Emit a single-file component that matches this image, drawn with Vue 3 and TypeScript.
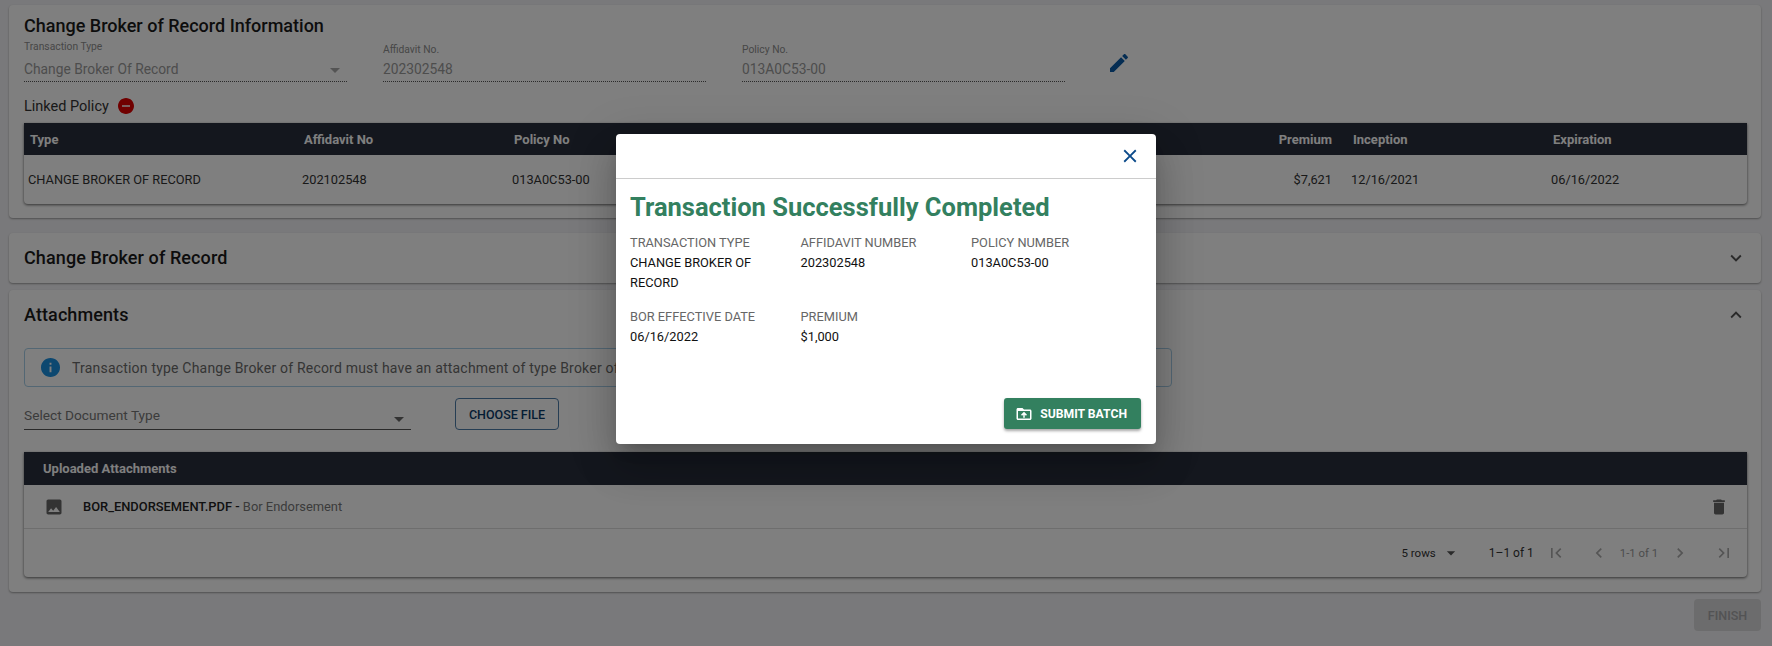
<template>
  <div class="page">
    <section class="card">
      <h2 class="card-title">Change Broker of Record Information</h2>
      <div class="fields">
        <div class="field field-select">
          <label>Transaction Type</label>
          <div class="field-value">
            Change Broker Of Record
            <svg class="field-arrow" viewBox="0 0 24 24"><path :d="icons.dropDown" /></svg>
          </div>
        </div>
        <div class="field">
          <label>Affidavit No.</label>
          <div class="field-value">202302548</div>
        </div>
        <div class="field">
          <label>Policy No.</label>
          <div class="field-value">013A0C53-00</div>
        </div>
        <svg class="edit-icon" viewBox="0 0 24 24"><path :d="icons.edit" /></svg>
      </div>

      <div class="linked">
        Linked Policy
        <svg class="linked-icon" viewBox="2 2 20 20"><path :d="icons.remove" /></svg>
      </div>

      <div class="policy-table">
        <div class="policy-row policy-head">
          <div v-for="col in policyColumns" :key="col.key" :class="{ right: col.right }">{{ col.label }}</div>
        </div>
        <div class="policy-row policy-body">
          <div v-for="col in policyColumns" :key="col.key" :class="{ right: col.right }">{{ policy[col.key] }}</div>
        </div>
      </div>
    </section>

    <section class="card card-collapsed">
      <h2 class="card-title wide">Change Broker of Record</h2>
      <svg class="chevron" viewBox="0 0 24 24"><path :d="icons.expandMore" /></svg>
    </section>

    <section class="card card-attachments">
      <div class="attach-head">
        <h2 class="card-title wide">Attachments</h2>
        <svg class="chevron" viewBox="0 0 24 24"><path :d="icons.expandLess" /></svg>
      </div>

      <div class="alert">
        <svg class="alert-icon" viewBox="2 2 20 20"><path :d="icons.info" /></svg>
        Transaction type Change Broker of Record must have an attachment of type Broker of Record Endorsement
      </div>

      <div class="doc-row">
        <div class="doc-select">
          Select Document Type
          <svg class="doc-arrow" viewBox="0 0 24 24"><path :d="icons.dropDown" /></svg>
        </div>
        <button class="choose-btn" type="button">CHOOSE FILE</button>
      </div>

      <div class="upload-table">
        <div class="upload-head">Uploaded Attachments</div>
        <div class="upload-row">
          <svg class="file-icon" viewBox="0 0 24 24"><path :d="icons.image" /></svg>
          <span class="file-name">BOR_ENDORSEMENT.PDF - </span>
          <span class="file-type">Bor Endorsement</span>
          <svg class="trash-icon" viewBox="0 0 24 24"><path :d="icons.trash" /></svg>
        </div>
        <div class="upload-footer">
          <span class="rows">5 rows</span>
          <svg class="rows-arrow" viewBox="0 0 24 24"><path :d="icons.dropDown" /></svg>
          <span class="range">1–1 of 1</span>
          <svg class="pager pager-first" viewBox="0 0 24 24"><path :d="icons.first" /></svg>
          <svg class="pager pager-prev" viewBox="0 0 24 24"><path :d="icons.prev" /></svg>
          <span class="page-of">1-1 of 1</span>
          <svg class="pager pager-next" viewBox="0 0 24 24"><path :d="icons.next" /></svg>
          <svg class="pager pager-last" viewBox="0 0 24 24"><path :d="icons.last" /></svg>
        </div>
      </div>
    </section>

    <div class="actions">
      <button class="finish-btn" type="button" disabled>FINISH</button>
    </div>

    <div class="overlay">
      <div class="modal">
        <div class="modal-head">
          <svg class="close-icon" viewBox="0 0 24 24"><path :d="icons.close" /></svg>
        </div>
        <div class="modal-body">
          <h1 class="modal-title">Transaction Successfully Completed</h1>
          <div class="summary">
            <div v-for="item in summary" :key="item.label" class="summary-item">
              <div class="summary-label">{{ item.label }}</div>
              <div class="summary-value">{{ item.value }}</div>
            </div>
          </div>
        </div>
        <div class="modal-actions">
          <button class="submit-btn" type="button">
            <svg viewBox="0 0 24 24"><path :d="icons.folderUpload" /></svg>
            SUBMIT BATCH
          </button>
        </div>
      </div>
    </div>
  </div>
</template>

<script setup lang="ts">
interface PolicyColumn {
  key: string
  label: string
  right?: boolean
}

const icons = {
  dropDown: 'M7 10l5 5 5-5z',
  edit: 'M3 17.25V21h3.75L17.81 9.94l-3.75-3.75L3 17.25zM20.71 7.04c.39-.39.39-1.02 0-1.41l-2.34-2.34c-.39-.39-1.02-.39-1.41 0l-1.83 1.83 3.75 3.75 1.83-1.83z',
  remove: 'M12 2C6.48 2 2 6.48 2 12s4.48 10 10 10 10-4.48 10-10S17.52 2 12 2zm5 11H7v-2h10v2z',
  info: 'M12 2C6.48 2 2 6.48 2 12s4.48 10 10 10 10-4.48 10-10S17.52 2 12 2zm1 15h-2v-6h2v6zm0-8h-2V7h2v2z',
  expandMore: 'M16.59 8.59L12 13.17 7.41 8.59 6 10l6 6 6-6z',
  expandLess: 'M12 8l-6 6 1.41 1.41L12 10.83l4.59 4.58L18 14z',
  image: 'M21 19V5c0-1.1-.9-2-2-2H5c-1.1 0-2 .9-2 2v14c0 1.1.9 2 2 2h14c1.1 0 2-.9 2-2zM8.5 13.5l2.5 3.01L14.5 12l4.5 6H5l3.5-4.5z',
  trash: 'M6 19c0 1.1.9 2 2 2h8c1.1 0 2-.9 2-2V7H6v12zM19 4h-3.5l-1-1h-5l-1 1H5v2h14V4z',
  first: 'M18.41 16.59L13.82 12l4.59-4.59L17 6l-6 6 6 6zM6 6h2v12H6z',
  prev: 'M15.41 7.41L14 6l-6 6 6 6 1.41-1.41L10.83 12z',
  next: 'M10 6L8.59 7.41 13.17 12l-4.58 4.59L10 18l6-6z',
  last: 'M5.59 7.41L10.18 12l-4.59 4.59L7 18l6-6-6-6zM16 6h2v12h-2z',
  close: 'M19 6.41L17.59 5 12 10.59 6.41 5 5 6.41 10.59 12 5 17.59 6.41 19 12 13.41 17.59 19 19 17.59 13.41 12z',
  folderUpload: 'M20 6h-8l-2-2H4c-1.1 0-1.99.9-1.99 2L2 18c0 1.1.9 2 2 2h16c1.1 0 2-.9 2-2V8c0-1.1-.9-2-2-2zm0 12H4V8h16v10zM8 13.01l1.41 1.41L11 12.84V17h2v-4.16l1.59 1.59L16 13.01 12.01 9 8 13.01z',
}

const policyColumns: PolicyColumn[] = [
  { key: 'type', label: 'Type' },
  { key: 'affidavit', label: 'Affidavit No' },
  { key: 'policy', label: 'Policy No' },
  { key: 'insured', label: 'Insured' },
  { key: 'premium', label: 'Premium', right: true },
  { key: 'inception', label: 'Inception' },
  { key: 'expiration', label: 'Expiration' },
]

const policy: Record<string, string> = {
  type: 'CHANGE BROKER OF RECORD',
  affidavit: '202102548',
  policy: '013A0C53-00',
  insured: '',
  premium: '$7,621',
  inception: '12/16/2021',
  expiration: '06/16/2022',
}

const summary = [
  { label: 'TRANSACTION TYPE', value: 'CHANGE BROKER OF RECORD' },
  { label: 'AFFIDAVIT NUMBER', value: '202302548' },
  { label: 'POLICY NUMBER', value: '013A0C53-00' },
  { label: 'BOR EFFECTIVE DATE', value: '06/16/2022' },
  { label: 'PREMIUM', value: '$1,000' },
]
</script>

<style>
html,
body {
  margin: 0;
  background: #f3f3f6;
}
</style>

<style scoped>
* {
  box-sizing: border-box;
}

.page {
  position: relative;
  min-height: 646px;
  padding: 5px 11px 15px 9px;
  font-family: Roboto, 'Liberation Sans', sans-serif;
  color: #222;
  overflow: hidden;
}

.card {
  background: #fff;
  border-radius: 4px;
  padding: 9px 14px 14px 15px;
  box-shadow: 0 1px 2px rgba(0, 0, 0, 0.35);
}

.card-title {
  margin: 0;
  font-size: 18px;
  line-height: 24px;
  font-weight: 500;
  color: #1a1a1a;
}

.card-title.wide {
  letter-spacing: 0.1px;
}

.fields {
  display: flex;
  gap: 36px;
  margin-top: 3px;
}

.field {
  width: 323px;
  display: flex;
  flex-direction: column;
  padding-top: 3px;
}

.field-select {
  padding-top: 0;
}

.field label {
  font-size: 10.3px;
  line-height: 12px;
  color: #8e8e8e;
  margin-bottom: 1px;
}

.field-select label {
  margin-bottom: 4px;
}

.field-value {
  position: relative;
  height: 25px;
  font-size: 13.8px;
  line-height: 24px;
  color: #9a9a9a;
  border-bottom: 1px dotted #555;
}

.field-arrow {
  position: absolute;
  right: 0;
  top: 1px;
  width: 24px;
  height: 24px;
  fill: #a8a8a8;
}

.edit-icon {
  width: 24px;
  height: 24px;
  margin: 10px 0 0 6px;
  fill: #0a5ba6;
}

.linked {
  display: flex;
  align-items: center;
  gap: 9px;
  height: 20px;
  margin-top: 14px;
  font-size: 14.5px;
  color: #333;
}

.linked-icon {
  width: 16px;
  height: 16px;
  fill: #e00000;
}

.policy-table {
  margin-top: 7px;
  border-radius: 0 0 4px 4px;
  box-shadow: 0 1px 3px rgba(0, 0, 0, 0.6);
}

.policy-row {
  display: grid;
  grid-template-columns: 274px 210px 236px 523px 80px 200px 200px;
  align-items: center;
}

.policy-head {
  height: 32px;
  background: #282e3c;
  color: #fff;
  font-size: 13px;
  font-weight: 700;
}

.policy-head > div {
  padding-left: 6px;
}

.policy-body {
  height: 49px;
  font-size: 12.8px;
  color: #333;
}

.policy-body > div {
  padding-left: 4px;
}

.policy-row > .right {
  padding: 0 15px 0 0;
  text-align: right;
}

.card-collapsed {
  display: flex;
  align-items: center;
  justify-content: space-between;
  height: 50px;
  margin-top: 15px;
  padding: 0 14px 0 15px;
}

.chevron {
  width: 22px;
  height: 22px;
  fill: #555;
}

.card-attachments {
  margin-top: 7px;
  padding-top: 0;
  padding-bottom: 15px;
}

.attach-head {
  display: flex;
  align-items: center;
  justify-content: space-between;
  height: 50px;
}

.alert {
  display: flex;
  align-items: center;
  width: 1148px;
  height: 39px;
  margin-top: 8px;
  padding-left: 16px;
  border: 1px solid #a6cfe8;
  border-radius: 4px;
  font-size: 14px;
  letter-spacing: 0.2px;
  color: #6a6a6a;
  white-space: nowrap;
  overflow: hidden;
}

.alert-icon {
  width: 19px;
  height: 19px;
  margin-right: 12px;
  fill: #1b90e0;
  flex-shrink: 0;
}

.doc-row {
  display: flex;
  margin-top: 11px;
}

.doc-select {
  position: relative;
  width: 387px;
  height: 32px;
  padding-top: 8px;
  font-size: 13.7px;
  line-height: 18px;
  color: #777;
  border-bottom: 1px solid #555;
}

.doc-arrow {
  position: absolute;
  right: 0;
  top: 9px;
  width: 24px;
  height: 24px;
  fill: #666;
}

.choose-btn {
  width: 104px;
  height: 32px;
  margin-left: 44px;
  border: 1px solid #4c7ca8;
  border-radius: 4px;
  background: transparent;
  font-family: inherit;
  font-size: 12.5px;
  font-weight: 500;
  color: #0b3a68;
}

.upload-table {
  margin-top: 22px;
  border-radius: 0 0 4px 4px;
  box-shadow: 0 1px 3px rgba(0, 0, 0, 0.6);
}

.upload-head {
  height: 33px;
  padding-left: 19px;
  background: #282e3c;
  color: #fff;
  font-size: 13px;
  line-height: 33px;
  font-weight: 700;
}

.upload-row {
  display: flex;
  align-items: center;
  height: 44px;
  padding: 0 18px 0 20px;
  border-bottom: 1px solid #ddd;
  font-size: 12.9px;
}

.file-icon {
  width: 20px;
  height: 20px;
  margin-right: 19px;
  fill: #666;
}

.file-name {
  font-weight: 500;
  color: #222;
  white-space: pre;
}

.file-type {
  color: #777;
}

.trash-icon {
  width: 20px;
  height: 20px;
  margin-left: auto;
  fill: #666;
}

.upload-footer {
  display: flex;
  align-items: center;
  justify-content: flex-end;
  height: 48px;
  padding-right: 13px;
  font-size: 12px;
  color: #333;
}

.rows {
  font-size: 11.5px;
}

.rows-arrow {
  width: 20px;
  height: 20px;
  margin-left: 5px;
  fill: #555;
}

.range {
  margin-left: 28px;
}

.pager {
  width: 20px;
  height: 20px;
  fill: #aaa;
}

.pager-first {
  margin-left: 12px;
}

.pager-prev {
  margin-left: 23px;
}

.page-of {
  margin-left: 11px;
  font-size: 11.3px;
  color: #999;
}

.pager-next {
  margin-left: 12px;
}

.pager-last {
  margin-left: 24px;
}

.actions {
  display: flex;
  justify-content: flex-end;
  margin-top: 7px;
}

.finish-btn {
  width: 67px;
  height: 32px;
  border: 0;
  border-radius: 4px;
  background: #d8d8da;
  font-family: inherit;
  font-size: 12.5px;
  font-weight: 500;
  color: #a6a6a8;
}

.overlay {
  position: absolute;
  inset: 0;
  display: flex;
  justify-content: center;
  align-items: flex-start;
  padding-top: 134px;
  background: rgba(0, 0, 0, 0.5);
}

.modal {
  display: flex;
  flex-direction: column;
  width: 540px;
  height: 310px;
  background: #fff;
  border-radius: 4px;
  box-shadow: 0 11px 15px -7px rgba(0, 0, 0, 0.2), 0 24px 38px 3px rgba(0, 0, 0, 0.14), 0 9px 46px 8px rgba(0, 0, 0, 0.12);
}

.modal-head {
  display: flex;
  justify-content: flex-end;
  align-items: center;
  height: 45px;
  padding-right: 15px;
  border-bottom: 1px solid #ccc;
}

.close-icon {
  width: 22px;
  height: 22px;
  fill: #0b4a8a;
}

.modal-body {
  flex: 1;
  padding: 12px 14px 0;
}

.modal-title {
  margin: 0;
  font-size: 25.5px;
  line-height: 32px;
  font-weight: 700;
  color: #33805f;
}

.summary {
  display: grid;
  grid-template-columns: repeat(3, 170.5px);
  row-gap: 14px;
  margin-top: 10px;
}

.summary-label,
.summary-value {
  font-size: 12.8px;
  line-height: 20px;
}

.summary-label {
  color: #666;
}

.summary-value {
  color: #111;
  padding-right: 20px;
}

.modal-actions {
  display: flex;
  justify-content: flex-end;
  padding: 0 15px 15px 0;
}

.submit-btn {
  display: flex;
  align-items: center;
  gap: 7px;
  height: 31px;
  padding: 0 14px 0 11px;
  border: 0;
  border-radius: 3px;
  background: #33805f;
  color: #fff;
  font-family: inherit;
  font-size: 12.2px;
  font-weight: 700;
  box-shadow: 0 2px 3px rgba(0, 0, 0, 0.35);
}

.submit-btn svg {
  width: 18px;
  height: 18px;
  fill: #fff;
}
</style>
